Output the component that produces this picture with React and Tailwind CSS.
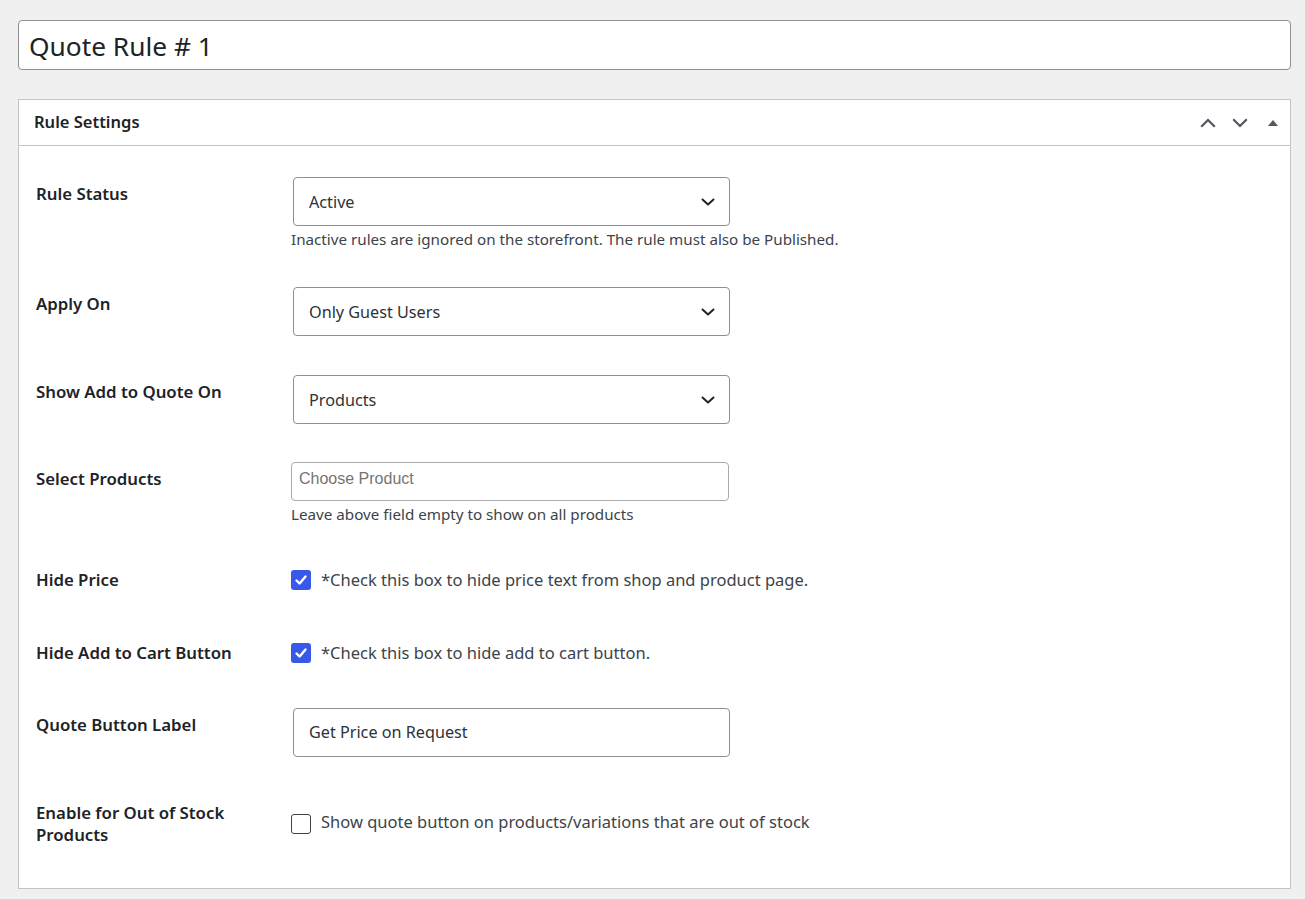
import React from 'react';

const Chevron = ({ dir = 'down', className = '' }) => (
  <svg viewBox="0 0 16 10" className={className} fill="none" stroke="currentColor" strokeWidth="2.2" strokeLinecap="square">
    {dir === 'down' ? <polyline points="2,2 8,8 14,2" /> : <polyline points="2,8 8,2 14,8" />}
  </svg>
);

const Select = ({ value }) => (
  <div className="w-[437px] h-[49px] border border-[#8c8f94] rounded-[4px] bg-white flex items-center justify-between pl-[15px] pr-[14px] pt-[1px] text-[16.2px] text-[#2c3338]">
    <span>{value}</span>
    <svg viewBox="0 0 14 8" className="w-[14px] h-[8px] text-[#1d2327]" fill="none" stroke="currentColor" strokeWidth="2" strokeLinecap="round" strokeLinejoin="round">
      <polyline points="1.5,1.5 7,6.5 12.5,1.5" />
    </svg>
  </div>
);

const Checkbox = ({ checked }) =>
  checked ? (
    <span className="w-[20px] h-[20px] rounded-[3px] bg-[#3858e9] flex items-center justify-center shrink-0">
      <svg viewBox="0 0 14 14" className="w-[14px] h-[14px]" fill="none" stroke="white" strokeWidth="2.4" strokeLinecap="round" strokeLinejoin="round">
        <polyline points="2.5,7.5 5.6,10.5 11.5,3.5" />
      </svg>
    </span>
  ) : (
    <span className="w-[20px] h-[20px] rounded-[3px] border border-[#3c434a] bg-white shrink-0" />
  );

const Label = ({ children, className = '' }) => (
  <div className={`w-[255px] shrink-0 pl-[17px] text-[16.8px] leading-[22px] font-semibold text-[#1d2327] ${className}`}>{children}</div>
);

const App = () => {
  return (
    <div className="min-h-screen bg-[#f0f0f1] pl-[18px] pr-[14px] pt-[20px] pb-[11px] text-[#1d2327]" style={{ fontFamily: '"Noto Sans", "Open Sans", sans-serif' }}>
      <div className="h-[50px] border border-[#8c8f94] rounded-[4px] bg-white flex items-center px-[10px] pt-[3px] text-[26.3px]">
        Quote Rule # 1
      </div>

      <div className="mt-[29px] border border-[#c3c4c7] bg-white">
        <div className="h-[46px] border-b border-[#c3c4c7] flex items-center justify-between pl-[15px] pr-[10px]">
          <h2 className="text-[16.5px] font-semibold text-[#1d2327]">Rule Settings</h2>
          <div className="flex items-center text-[#50575e]">
            <Chevron dir="up" className="w-[16px] h-[10px] mx-[8px]" />
            <Chevron dir="down" className="w-[16px] h-[10px] mx-[8px]" />
            <svg viewBox="0 0 10 6" className="w-[10px] h-[6px] ml-[12px] mr-[2px]" fill="currentColor">
              <polygon points="0,6 5,0 10,6" />
            </svg>
          </div>
        </div>

        <div className="pt-[31px] pb-[42px]">
          {/* Rule Status */}
          <div className="flex">
            <Label className="pt-[6px]">Rule Status</Label>
            <div className="pl-[19px]">
              <Select value="Active" />
              <p className="mt-[3px] -ml-[2px] text-[15.2px] leading-[20px] text-[#3c434a]">
                Inactive rules are ignored on the storefront. The rule must also be Published.
              </p>
            </div>
          </div>

          {/* Apply On */}
          <div className="flex mt-[38px]">
            <Label className="pt-[6px]">Apply On</Label>
            <div className="pl-[19px]">
              <Select value="Only Guest Users" />
            </div>
          </div>

          {/* Show Add to Quote On */}
          <div className="flex mt-[39px]">
            <Label className="pt-[6px]">Show Add to Quote On</Label>
            <div className="pl-[19px]">
              <Select value="Products" />
            </div>
          </div>

          {/* Select Products */}
          <div className="flex mt-[38px]">
            <Label className="pt-[6px]">Select Products</Label>
            <div className="pl-[17px]">
              <div className="w-[438px] h-[39px] border border-[#aaaaaa] rounded-[4px] bg-white px-[7px] pt-[5px] text-[16px] leading-[22px] text-[#757575]" style={{ fontFamily: '"Liberation Sans", Arial, sans-serif' }}>
                Choose Product
              </div>
              <p className="mt-[3px] text-[15.2px] leading-[20px] text-[#3c434a]">Leave above field empty to show on all products</p>
            </div>
          </div>

          {/* Hide Price */}
          <div className="flex mt-[44px] items-center">
            <Label>Hide Price</Label>
            <div className="pl-[17px] flex items-center gap-[10px] text-[16.5px] text-[#3c434a]">
              <Checkbox checked />
              <span>*Check this box to hide price text from shop and product page.</span>
            </div>
          </div>

          {/* Hide Add to Cart Button */}
          <div className="flex mt-[48px] items-center">
            <Label>Hide Add to Cart Button</Label>
            <div className="pl-[17px] flex items-center gap-[10px] text-[16.5px] text-[#3c434a]">
              <Checkbox checked />
              <span>*Check this box to hide add to cart button.</span>
            </div>
          </div>

          {/* Quote Button Label */}
          <div className="flex mt-[42px]">
            <Label className="pt-[6px]">Quote Button Label</Label>
            <div className="pl-[19px]">
              <div className="w-[437px] h-[49px] border border-[#8c8f94] rounded-[4px] bg-white flex items-center pl-[15px] pt-[1px] text-[16.2px] text-[#2c3338]">
                Get Price on Request
              </div>
            </div>
          </div>

          {/* Enable for Out of Stock */}
          <div className="flex mt-[45px]">
            <Label>
              Enable for Out of Stock
              <br />
              Products
            </Label>
            <div className="pl-[17px] pt-[12px] flex items-center gap-[10px] self-start text-[16.5px] text-[#3c434a]">
              <Checkbox />
              <span className="-mt-[4px]">Show quote button on products/variations that are out of stock</span>
            </div>
          </div>
        </div>
      </div>
    </div>
  );
};

export default App;
